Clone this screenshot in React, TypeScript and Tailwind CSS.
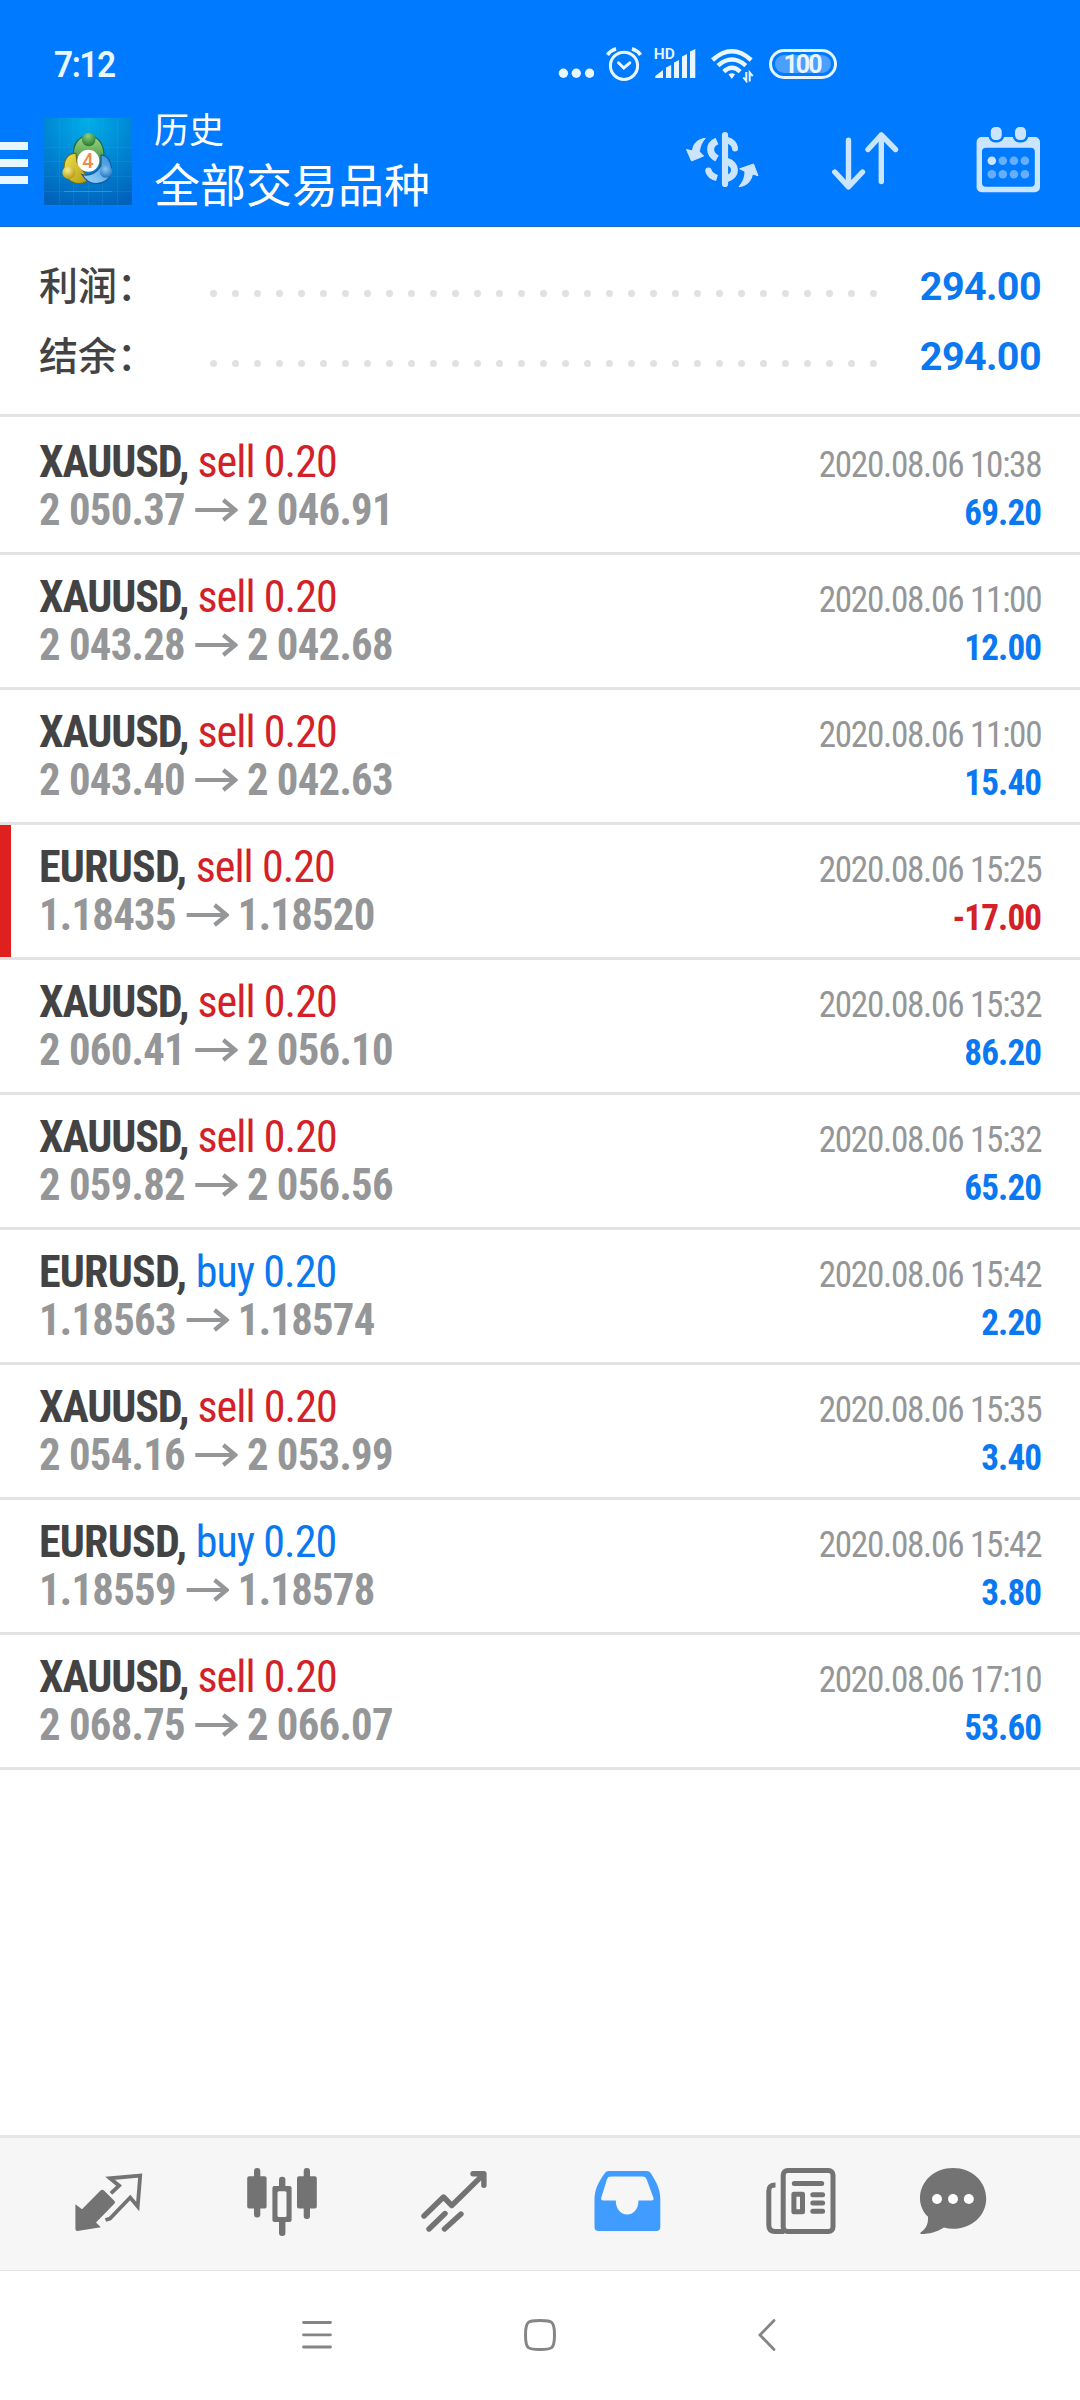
import React from "react";

type Deal = {
  symbol: string;
  side: "sell" | "buy";
  volume: string;
  open: string;
  close: string;
  time: string;
  profit: string;
};

const DEALS: Deal[] = [
  { symbol: "XAUUSD", side: "sell", volume: "0.20", open: "2 050.37", close: "2 046.91", time: "2020.08.06 10:38", profit: "69.20" },
  { symbol: "XAUUSD", side: "sell", volume: "0.20", open: "2 043.28", close: "2 042.68", time: "2020.08.06 11:00", profit: "12.00" },
  { symbol: "XAUUSD", side: "sell", volume: "0.20", open: "2 043.40", close: "2 042.63", time: "2020.08.06 11:00", profit: "15.40" },
  { symbol: "EURUSD", side: "sell", volume: "0.20", open: "1.18435", close: "1.18520", time: "2020.08.06 15:25", profit: "-17.00" },
  { symbol: "XAUUSD", side: "sell", volume: "0.20", open: "2 060.41", close: "2 056.10", time: "2020.08.06 15:32", profit: "86.20" },
  { symbol: "XAUUSD", side: "sell", volume: "0.20", open: "2 059.82", close: "2 056.56", time: "2020.08.06 15:32", profit: "65.20" },
  { symbol: "EURUSD", side: "buy", volume: "0.20", open: "1.18563", close: "1.18574", time: "2020.08.06 15:42", profit: "2.20" },
  { symbol: "XAUUSD", side: "sell", volume: "0.20", open: "2 054.16", close: "2 053.99", time: "2020.08.06 15:35", profit: "3.40" },
  { symbol: "EURUSD", side: "buy", volume: "0.20", open: "1.18559", close: "1.18578", time: "2020.08.06 15:42", profit: "3.80" },
  { symbol: "XAUUSD", side: "sell", volume: "0.20", open: "2 068.75", close: "2 066.07", time: "2020.08.06 17:10", profit: "53.60" },
];

const SUMMARY = [
  { label: "利润：", value: "294.00" },
  { label: "结余：", value: "294.00" },
];

function StatusBar() {
  return (
    <div className="flex h-[100px] items-start pl-[54px] pt-[47px] text-[#e8f6ff]">
      <div className="w-[504px] origin-left scale-x-[.93] font-['Roboto',sans-serif] text-[36px] font-semibold leading-[36px] tracking-[-1.6px]">7:12</div>

      <svg width="36" height="36" viewBox="0 0 36 36" fill="currentColor">
        <circle cx="5.4" cy="26.3" r="4.7" />
        <circle cx="18.3" cy="26.3" r="4.7" />
        <circle cx="31.6" cy="26.3" r="4.7" />
      </svg>

      {/* Alarm */}
      <svg className="ml-3" width="36" height="36" viewBox="0 0 36 36" fill="none" stroke="currentColor" strokeWidth="3">
        <circle cx="18" cy="18.8" r="13.6" />
        <path d="M12.5 15.8l5.3 5.2 6-5.2" strokeLinecap="round" />
        <path d="M1.5 8Q4.5 3.5 10 1.8M34.5 8Q31.5 3.5 26 1.8" strokeWidth="3.8" />
      </svg>

      {/* HD signal */}
      <svg className="ml-[11px] overflow-visible" width="44" height="36" viewBox="-1 0 44 36" fill="currentColor">
        <text x="-0.3" y="12.3" fontFamily="Roboto, sans-serif" fontSize="15.5" fontWeight="600">HD</text>
        <path d="M1.3 31v-2L9 23v8zM12 31V20.5l5.2-2.5v13zM20 31V15.5l5-2.5v18zM28 31V9.5L33 7v24zM36 31V4.5L41.3 2v29z" />
      </svg>

      {/* Wifi */}
      <svg className="ml-[14px]" width="43" height="36" viewBox="0 0 43 36" fill="none" stroke="currentColor" strokeWidth="4.4">
        <path d="M1.5 13Q20.8-4.5 40.2 13M7 18.6Q20.8 6.5 34.8 18.6M12.8 24.6Q20.8 17 29.2 24.6" />
        <path d="M17.5 27.3q3.3-2.3 6.6 0l-3.3 4.7z" fill="currentColor" stroke="none" />
        <path d="M35.3 25v9l-3-3.6M38.7 34.5v-9l3 3.6" strokeWidth="2" />
      </svg>

      <div className="ml-[15px] mt-[2px] flex h-[30px] w-[68px] items-center justify-center rounded-full border-[3px] border-current p-[3px]">
        <div className="flex h-full w-full items-center justify-center rounded-full bg-[#4b9fff] pr-[2px] font-['Roboto',sans-serif] text-[25px] font-bold leading-none tracking-[-2px]">
          100
        </div>
      </div>
    </div>
  );
}

function AppLogo() {
  return (
    <svg width="88" height="87" viewBox="0 0 88 87">
      <defs>
        <radialGradient id="logoBg" cx="50%" cy="5%" r="100%">
          <stop offset="0%" stopColor="#00aee8" />
          <stop offset="50%" stopColor="#0086d4" />
          <stop offset="100%" stopColor="#0062ba" />
        </radialGradient>
        <linearGradient id="logoGreen" x1="0" y1="0" x2="0" y2="1">
          <stop offset="0%" stopColor="#a3d489" />
          <stop offset="100%" stopColor="#2f8a2c" />
        </linearGradient>
        <linearGradient id="logoYellow" x1="0" y1="0" x2="1" y2="1">
          <stop offset="0%" stopColor="#f2e24a" />
          <stop offset="100%" stopColor="#b39a12" />
        </linearGradient>
        <linearGradient id="logoBlue" x1="1" y1="0" x2="0" y2="1">
          <stop offset="0%" stopColor="#2f8fdd" />
          <stop offset="100%" stopColor="#a5d8f8" />
        </linearGradient>
        <radialGradient id="headGreen" cx="45%" cy="25%" r="75%">
          <stop offset="0%" stopColor="#8fcf7f" />
          <stop offset="100%" stopColor="#1f7a2a" />
        </radialGradient>
        <radialGradient id="headYellow" cx="40%" cy="30%" r="75%">
          <stop offset="0%" stopColor="#f6ee8a" />
          <stop offset="100%" stopColor="#b09512" />
        </radialGradient>
        <radialGradient id="headBlue" cx="45%" cy="30%" r="75%">
          <stop offset="0%" stopColor="#8cc8f5" />
          <stop offset="100%" stopColor="#1a6fc0" />
        </radialGradient>
      </defs>
      <rect width="88" height="87" fill="url(#logoBg)" />
      <path d="M0 29.5h88M0 43.5h88M0 58.5h88M0 73.5h88M15.5 0v87M29.5 0v87M44.5 0v87M58.5 0v87M73.5 0v87" stroke="#39b6ee" strokeOpacity=".16" />
      <path d="M20 73.5h48" stroke="#54c4f2" strokeOpacity=".4" />
      <path d="M29.5 36C29 26 35 18 44.7 18S59 26 60 35c0 6-1 9-3 13L33 40z" fill="url(#logoGreen)" stroke="#1d6b3a" strokeWidth="1.2" />
      <path d="M32 35.5c-7-.5-12 5-12 14 0 9 6 16 15.5 16 5 0 9-3 9-5L33 44z" fill="url(#logoYellow)" stroke="#6b6a22" strokeWidth="1.2" />
      <path d="M57 37c6 0 10 6 10.5 14S62 65.5 52 65.5c-6 0-11-4-14-9 8 2 15-2 19-9z" fill="url(#logoBlue)" stroke="#15579a" strokeWidth="1.2" />
      <circle cx="44.7" cy="21.5" r="6.8" fill="url(#headGreen)" />
      <circle cx="24.8" cy="54.5" r="6.5" fill="url(#headYellow)" />
      <circle cx="62" cy="53.5" r="6.3" fill="url(#headBlue)" />
      <circle cx="44.3" cy="42.8" r="11" fill="#fff" />
      <text x="44" y="50" textAnchor="middle" fontFamily="Roboto, sans-serif" fontSize="20" fontWeight="500" fill="#f08a4b">4</text>
    </svg>
  );
}

function AppBar() {
  return (
    <div className="flex h-[127px] items-start border-b border-[#1a6dcb]">
      <div className="mt-[42px] flex w-7 flex-col gap-[9px]">
        <div className="h-[8px] bg-[#e8f6ff]" />
        <div className="h-[8px] bg-[#e8f6ff]" />
        <div className="h-[8px] bg-[#e8f6ff]" />
      </div>
      <div className="ml-4 mt-[18px]">
        <AppLogo />
      </div>
      <div className="ml-[22px] mt-[8px] w-[531px] font-['Noto_Sans_CJK_SC',sans-serif] text-white">
        <div className="text-[35px] leading-[40px]">历史</div>
        <div className="mt-[7px] text-[46px] leading-[54px]">全部交易品种</div>
      </div>

      {/* Currency exchange */}
      <svg className="mt-[31px]" width="74" height="58" viewBox="0 0 74 58" fill="none" stroke="#cce5ff" strokeWidth="7">
        <path d="M40 4v49" strokeWidth="6.2" strokeLinecap="round" />
        <path d="M42 9Q49 11 50 17" strokeWidth="6" />
        <circle cx="50" cy="17.5" r="3" fill="#cce5ff" stroke="none" />
        <path d="M42 30.5C52 33 52 45 42 47.5M32 10C23 14 24 23 32 27.5" />
        <path d="M23.5 40q1.5 5 8.5 7" strokeWidth="6.5" />
        <circle cx="23.4" cy="39.5" r="3.1" fill="#cce5ff" stroke="none" />
        <path
          d="M20.3 7.3C12 8.5 8 13 7.5 20L1.5 18.5 6.5 30 18.6 25l-4.2-4.3C15 15 17 11 20.3 7.3zM54 55.7C58 51 60 46 60 40.5l-5.3-2.7L68.5 33 73 44.7 67.5 43C66 51 61 55 54 55.7z"
          fill="#cce5ff"
          strokeWidth="1"
          strokeLinejoin="round"
        />
      </svg>

      {/* Sort */}
      <svg className="ml-[73px] mt-[31px]" width="68" height="60" viewBox="0 0 68 60" fill="none" stroke="#cce5ff" strokeWidth="5.4" strokeLinecap="round" strokeLinejoin="round">
        <path d="M16.5 9.3v46M2.8 41l13.7 14.8L30.5 41M49.3 50.5V4M36 18.5L49.3 4l14.2 14.5" />
      </svg>

      {/* Calendar */}
      <svg className="ml-[76px] mt-[26px]" width="66" height="68" viewBox="0 0 66 68">
        <path
          fill="#cce5ff"
          fillRule="evenodd"
          d="M5.6 11H59a5 5 0 0 1 5 5v45.3a5 5 0 0 1-5 5H5.6a5 5 0 0 1-5-5V16a5 5 0 0 1 5-5zM10 21.7a4 4 0 0 0-4 4v31a4 4 0 0 0 4 4h44.8a4 4 0 0 0 4-4v-31a4 4 0 0 0-4-4z"
        />
        <g fill="#cce5ff" stroke="#007aff" strokeWidth="2.5">
          <rect x="13.5" y="-0.3" width="13.5" height="15.6" rx="6" />
          <rect x="37.8" y="-0.3" width="13.5" height="15.6" rx="6" />
        </g>
        <circle cx="15.8" cy="34.7" r="4.3" fill="#cce5ff" />
        <g fill="#66afff">
          <circle cx="26.8" cy="34.7" r="4.3" />
          <circle cx="37.9" cy="34.7" r="4.3" />
          <circle cx="48.9" cy="34.7" r="4.3" />
          <circle cx="15.8" cy="48.3" r="4.3" />
          <circle cx="26.8" cy="48.3" r="4.3" />
          <circle cx="37.9" cy="48.3" r="4.3" />
          <circle cx="48.9" cy="48.3" r="4.3" />
        </g>
      </svg>
    </div>
  );
}

function Summary() {
  return (
    <div className="h-[190px] border-b-[3px] border-[#e3e3e4] px-[39px] pt-[23px]">
      {SUMMARY.map((row) => (
        <div key={row.label} className="flex h-[70px] items-center">
          <div className="mb-[3px] w-[171px] font-['Noto_Sans_CJK_SC',sans-serif] text-[39px] font-medium leading-[67px] text-[#434343]">{row.label}</div>
          <div className="mt-[17px] flex w-[667px] justify-between">
            {Array.from({ length: 31 }, (_, i) => (
              <span key={i} className="size-[7px] rounded-full bg-[#e0e1e3]" />
            ))}
          </div>
          <div className="flex-1 pt-[3px] text-right font-['Roboto',sans-serif] text-[39.5px] font-bold tracking-[-0.6px] text-[#0a78f0]">{row.value}</div>
        </div>
      ))}
    </div>
  );
}

function DealRow({ deal }: { deal: Deal }) {
  const loss = deal.profit.startsWith("-");
  return (
    <div className="flex h-[135px] border-b-[3px] border-[#e3e3e4]">
      <div className={loss ? "w-[11px] bg-[#e01f1f]" : "w-[11px]"} />
      <div className="flex flex-1 justify-between pl-[28px] pr-[39px] pt-[18px] font-['Roboto_Condensed','Roboto',sans-serif] [font-stretch:75%]">
        <div className="text-[44px] leading-[48px]">
          <div className="whitespace-pre">
            <span className={deal.symbol === "EURUSD" ? "font-bold tracking-[-0.8px] text-[#434343]" : "font-bold tracking-[-1.15px] text-[#434343]"}>
              {deal.symbol},{" "}
            </span>
            <span className={deal.side === "sell" ? "tracking-[-0.95px] text-[#d42027]" : "tracking-[-0.95px] text-[#0a78f0]"}>
              {deal.side} {deal.volume}
            </span>
          </div>
          <div className="flex origin-left scale-x-[.97] items-center font-bold tracking-[-0.75px] text-[#959698]">
            {deal.open}
            <svg className="ml-[11px] mr-[9px]" width="44" height="24" viewBox="0 0 44 24" fill="none" stroke="currentColor" strokeWidth="4.2">
              <path d="M0 12h41M29 2l12.5 10L29 22" />
            </svg>
            {deal.close}
          </div>
        </div>
        <div className="pt-[3px] text-right text-[37px] leading-[48px]">
          <div className="origin-right scale-x-95 tracking-[-1.35px] text-[#959698]">{deal.time}</div>
          <div className={loss ? "origin-right scale-x-95 font-bold tracking-[-0.9px] text-[#d42027]" : "origin-right scale-x-95 font-bold tracking-[-0.9px] text-[#0a78f0]"}>
            {deal.profit}
          </div>
        </div>
      </div>
    </div>
  );
}

function TabBar() {
  return (
    <div className="flex h-[136px] border-b border-t-[3px] border-b-[#e2e2e2] border-t-[#e7e7e7] bg-[#f6f6f6] pl-[22px] text-[#737373]">
      {/* Quotes */}
      <div className="flex w-[173px] justify-center pt-[35px]">
        <svg width="68" height="60" viewBox="0 0 68 60">
          <path d="M.4 31.3L7 36.3 25.5 17.5q1.8-1.5 3.5 0L39.5 28q1 1.3 0 2.6L21 49.5l4.8 4.8L2.5 58Q.4 58 .4 56z" fill="currentColor" />
          <path d="M35.9 20.3l8.2-7.6-9.1-7.4L65.2 2.6 62.7 33.5 55.2 24.5 35 45.5l-4.5 1.5" fill="none" stroke="currentColor" strokeWidth="3.8" />
        </svg>
      </div>
      {/* Candles */}
      <div className="flex w-[173px] justify-center pt-[30px]">
        <svg width="70" height="69" viewBox="0 0 70 69" fill="currentColor">
          <rect x="7" y="0" width="6.3" height="49.5" rx="3" />
          <rect x=".2" y="8.3" width="19.4" height="32.2" rx="2" />
          <rect x="56.7" y="0" width="6.3" height="51" rx="3" />
          <rect x="50" y="8.3" width="19.8" height="32.2" rx="2" />
          <rect x="32" y="8.7" width="6.4" height="59.3" rx="3" />
          <rect x="25.4" y="18" width="19.2" height="36" rx="2" />
          <rect x="30.5" y="23.3" width="9" height="25.7" rx="1.5" fill="#f6f6f6" />
        </svg>
      </div>
      {/* Trade */}
      <div className="flex w-[173px] justify-center pt-[33px]">
        <svg width="67" height="61" viewBox="0 0 67 61" fill="none" stroke="currentColor" strokeWidth="5.4" strokeLinecap="round" strokeLinejoin="round">
          <path d="M3 45l19.5-19 8.3 8.5L62.5 3.3M52 2.8h10.9v11.4M24 42.5L8 58M40 43L23.5 58" />
        </svg>
      </div>
      {/* History */}
      <div className="flex w-[173px] justify-center pt-[33px]">
        <svg width="67" height="60" viewBox="0 0 67 61" preserveAspectRatio="none">
          <path
            fill="#409cff"
            fillRule="evenodd"
            d="M15 0h37.5q3 0 4.5 2.5C63 12 66.3 19 66.3 29v28q0 4-4 4H4.5q-4 0-4-4V29C.5 19 4 12 10.5 2.5Q12 0 15 0zM17 5.7q-3 0-4 2.5L7.2 27.5Q6.7 30 9.2 30h12.6c0 19 22.7 19 22.7 0h13q2.5 0 2-2.5L52.5 8.2q-1-2.5-4-2.5z"
          />
        </svg>
      </div>
      {/* News */}
      <div className="flex w-[173px] justify-center pt-[30px]">
        <svg width="70" height="67" viewBox="0 0 70 67" fill="none" stroke="currentColor" strokeWidth="5">
          <rect x="17.2" y="2.5" width="49.8" height="61" rx="4.5" />
          <path d="M9.5 17C4.5 17 2.8 19 2.8 23v34q0 6.5 6.5 6.5h9" />
          <rect x="27.9" y="26.2" width="8.6" height="17.6" strokeLinejoin="round" />
          <path d="M28.3 15.5h27.4M46.8 26.7h9.8M46.8 35h9.8M46.8 43.3h9.8" strokeLinecap="round" />
        </svg>
      </div>
      {/* Chat */}
      <div className="flex w-[132px] justify-center pt-[30px]">
        <svg width="67" height="67" viewBox="0 0 67 67">
          <path
            d="M33 0C51.5 0 66.2 13 66.2 30.4S51.5 60.7 33 60.7q-4.5 0-9-1.2C17 64 9 66 1.5 66c-1.5 0-1.5-1-.5-1.8C5 61 8.5 57 8 48.7 3 44 0 37 0 30.4 0 13 14.5 0 33 0z"
            fill="currentColor"
          />
          <circle cx="17" cy="31" r="5" fill="#fff" />
          <circle cx="33" cy="31" r="5" fill="#fff" />
          <circle cx="48.8" cy="31" r="5" fill="#fff" />
        </svg>
      </div>
    </div>
  );
}

function NavBar() {
  return (
    <div className="flex h-[129px] items-center pb-[2px] pl-[302px] text-[#858585]">
      <svg width="30" height="32" viewBox="0 0 30 32" stroke="currentColor" strokeWidth="2.8" strokeLinecap="round">
        <path d="M1.5 3.5h27M1.5 15.8h27M1.5 28h27" />
      </svg>
      <svg className="ml-[192px]" width="32" height="32" viewBox="0 0 32 32" fill="none" stroke="currentColor" strokeWidth="3">
        <path d="M16 1.5C28 1.5 30.5 2 30.5 16S28 30.5 16 30.5 1.5 30 1.5 16 4 1.5 16 1.5z" />
      </svg>
      <svg className="ml-[202px]" width="18" height="32" viewBox="0 0 18 32" fill="none" stroke="currentColor" strokeWidth="2.8" strokeLinecap="round">
        <path d="M16 1.5L2 16l14 14.5" />
      </svg>
    </div>
  );
}

export default function App() {
  return (
    <div className="flex h-[2400px] w-[1080px] flex-col overflow-hidden bg-white">
      <header className="bg-[#007aff]">
        <StatusBar />
        <AppBar />
      </header>
      <Summary />
      <main className="flex-1 pt-[3px]">
        {DEALS.map((deal, i) => (
          <DealRow key={i} deal={deal} />
        ))}
      </main>
      <TabBar />
      <NavBar />
    </div>
  );
}
